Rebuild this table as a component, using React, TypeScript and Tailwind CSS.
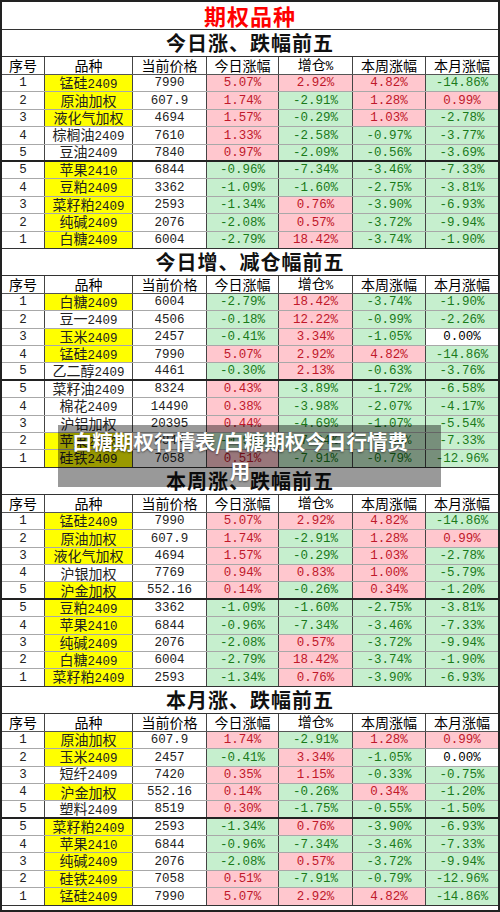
type Row = [string, string, boolean, string, string, string, string, string];

const sections: { title: string; rows: Row[] }[] = [
  {
    title: "今日涨、跌幅前五",
    rows: [
      ["1", "锰硅2409", true, "7990", "5.07%", "2.92%", "4.82%", "-14.86%"],
      ["2", "原油加权", true, "607.9", "1.74%", "-2.91%", "1.28%", "0.99%"],
      ["3", "液化气加权", true, "4694", "1.57%", "-0.29%", "1.03%", "-2.78%"],
      ["4", "棕榈油2409", false, "7610", "1.33%", "-2.58%", "-0.97%", "-3.77%"],
      ["5", "豆油2409", false, "7840", "0.97%", "-2.09%", "-0.56%", "-3.69%"],
      ["5", "苹果2410", true, "6844", "-0.96%", "-7.34%", "-3.46%", "-7.33%"],
      ["4", "豆粕2409", true, "3362", "-1.09%", "-1.60%", "-2.75%", "-3.81%"],
      ["3", "菜籽粕2409", true, "2593", "-1.34%", "0.76%", "-3.90%", "-6.93%"],
      ["2", "纯碱2409", true, "2076", "-2.08%", "0.57%", "-3.72%", "-9.94%"],
      ["1", "白糖2409", true, "6004", "-2.79%", "18.42%", "-3.74%", "-1.90%"],
    ],
  },
  {
    title: "今日增、减仓幅前五",
    rows: [
      ["1", "白糖2409", true, "6004", "-2.79%", "18.42%", "-3.74%", "-1.90%"],
      ["2", "豆一2409", false, "4506", "-0.18%", "12.22%", "-0.99%", "-2.26%"],
      ["3", "玉米2409", true, "2457", "-0.41%", "3.34%", "-1.05%", "0.00%"],
      ["4", "锰硅2409", true, "7990", "5.07%", "2.92%", "4.82%", "-14.86%"],
      ["5", "乙二醇2409", false, "4461", "-0.30%", "2.13%", "-0.63%", "-3.76%"],
      ["5", "菜籽油2409", false, "8324", "0.43%", "-3.89%", "-1.72%", "-6.58%"],
      ["4", "棉花2409", false, "14490", "0.38%", "-3.98%", "-2.07%", "-4.17%"],
      ["3", "沪铝加权", false, "20395", "0.44%", "-4.69%", "-1.07%", "-5.54%"],
      ["2", "苹果2410", true, "6844", "-0.96%", "-7.34%", "-3.46%", "-7.33%"],
      ["1", "硅铁2409", true, "7058", "0.51%", "-7.91%", "-0.79%", "-12.96%"],
    ],
  },
  {
    title: "本周涨、跌幅前五",
    rows: [
      ["1", "锰硅2409", true, "7990", "5.07%", "2.92%", "4.82%", "-14.86%"],
      ["2", "原油加权", true, "607.9", "1.74%", "-2.91%", "1.28%", "0.99%"],
      ["3", "液化气加权", true, "4694", "1.57%", "-0.29%", "1.03%", "-2.78%"],
      ["4", "沪银加权", false, "7769", "0.94%", "0.83%", "1.00%", "-5.79%"],
      ["5", "沪金加权", true, "552.16", "0.14%", "-0.26%", "0.34%", "-1.20%"],
      ["5", "豆粕2409", true, "3362", "-1.09%", "-1.60%", "-2.75%", "-3.81%"],
      ["4", "苹果2410", true, "6844", "-0.96%", "-7.34%", "-3.46%", "-7.33%"],
      ["3", "纯碱2409", true, "2076", "-2.08%", "0.57%", "-3.72%", "-9.94%"],
      ["2", "白糖2409", true, "6004", "-2.79%", "18.42%", "-3.74%", "-1.90%"],
      ["1", "菜籽粕2409", true, "2593", "-1.34%", "0.76%", "-3.90%", "-6.93%"],
    ],
  },
  {
    title: "本月涨、跌幅前五",
    rows: [
      ["1", "原油加权", true, "607.9", "1.74%", "-2.91%", "1.28%", "0.99%"],
      ["2", "玉米2409", true, "2457", "-0.41%", "3.34%", "-1.05%", "0.00%"],
      ["3", "短纤2409", false, "7420", "0.35%", "1.15%", "-0.33%", "-0.75%"],
      ["4", "沪金加权", true, "552.16", "0.14%", "-0.26%", "0.34%", "-1.20%"],
      ["5", "塑料2409", false, "8519", "0.30%", "-1.75%", "-0.55%", "-1.50%"],
      ["5", "菜籽粕2409", true, "2593", "-1.34%", "0.76%", "-3.90%", "-6.93%"],
      ["4", "苹果2410", true, "6844", "-0.96%", "-7.34%", "-3.46%", "-7.33%"],
      ["3", "纯碱2409", true, "2076", "-2.08%", "0.57%", "-3.72%", "-9.94%"],
      ["2", "硅铁2409", true, "7058", "0.51%", "-7.91%", "-0.79%", "-12.96%"],
      ["1", "锰硅2409", true, "7990", "5.07%", "2.92%", "4.82%", "-14.86%"],
    ],
  },
];

const headers = ["序号", "品种", "当前价格", "今日涨幅", "增仓%", "本周涨幅", "本月涨幅"];

const grid = "grid grid-rows-1 grid-cols-[43px_88px_74px_72px_74px_73px_72px]";
const cell = "flex items-center justify-center min-h-0";

// splits latin digits from CJK so the numbers get the narrow mono face
const Mixed = ({ text }: { text: string }) => (
  <span className="text-[12px] leading-none whitespace-nowrap">
    {text
      .split(/([\x00-\x7f]+)/)
      .filter(Boolean)
      .map((part, i) =>
        /^[\x00-\x7f]+$/.test(part) ? (
          <span key={i} className="font-['Liberation_Mono',monospace] text-[12.5px]">
            {part}
          </span>
        ) : (
          <span key={i} className="font-['Noto_Sans_CJK_SC',sans-serif] text-[14px]">
            {part}
          </span>
        )
      )}
  </span>
);

const pctClass = (v: string) => {
  if (v.startsWith("-")) return "bg-[#c6efce] text-[#1a7a1a]";
  if (parseFloat(v) === 0) return "bg-white text-black";
  return "bg-[#ffc7ce] text-[#c0182a]";
};

const Section = ({ title, rows }: { title: string; rows: Row[] }) => (
  <div>
    <div className="h-[27px] flex items-center justify-center border-b border-[#333] font-['Noto_Sans_CJK_SC',sans-serif] font-bold text-[20px] text-[#111] tracking-[1px]">
      {title}
    </div>
    <div className={`${grid} h-[18px] border-b border-[#555] text-black`}>
      {headers.map((h, i) => (
        <div key={h} className={`${cell} ${i < 6 ? "border-r border-[#444]" : ""}`}>
          <Mixed text={h} />
        </div>
      ))}
    </div>
    {rows.map((r, ri) => {
      const line =
        ri === 4
          ? "border-b-2 border-b-[#222]"
          : ri === 9
            ? "border-b border-b-[#333]"
            : "border-b border-b-[#a8a8a8]";
      return (
        <div key={ri} className={`${grid} h-[17.4px] ${line}`}>
          <div className={`${cell} border-r border-[#444] bg-white text-[#222]`}>
            <Mixed text={r[0]} />
          </div>
          <div className={`${cell} border-r border-[#444] text-[#222] ${r[2] ? "bg-[#ffff00]" : "bg-white"}`}>
            <Mixed text={r[1]} />
          </div>
          <div className={`${cell} border-r border-[#444] bg-white text-[#222]`}>
            <Mixed text={r[3]} />
          </div>
          {[r[4], r[5], r[6], r[7]].map((v, i) => (
            <div key={i} className={`${cell} ${i < 3 ? "border-r border-[#444]" : ""} ${pctClass(v)}`}>
              <Mixed text={v} />
            </div>
          ))}
        </div>
      );
    })}
  </div>
);

export default function App() {
  return (
    <div className="relative w-[500px] h-[912px] overflow-hidden border-2 border-[#222] bg-white">
      <div className="h-[28px] flex items-center justify-center border-b border-[#333] font-['Noto_Sans_CJK_SC',sans-serif] font-bold text-[22px] text-[#ff0000] tracking-[1px]">
        期权品种
      </div>
      {sections.map((s) => (
        <Section key={s.title} title={s.title} rows={s.rows} />
      ))}

      {/* caption banner over the table */}
      <div className="absolute left-[56px] top-[423px] w-[383px] h-[62px] bg-black/40 pl-[9px] pr-[28px] py-[2px] text-center text-white font-['Noto_Sans_CJK_SC',sans-serif] font-bold text-[20.5px] leading-[29px] [text-shadow:0_1px_2px_rgba(0,0,0,0.5)]">
        白糖期权行情表/白糖期权今日行情费用
      </div>
    </div>
  );
}
